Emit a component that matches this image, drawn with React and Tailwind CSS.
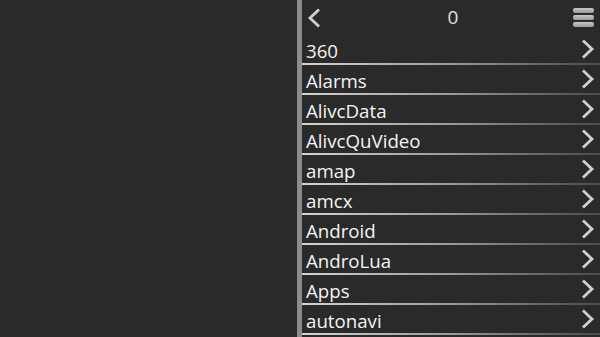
import React from "react";

const items = ["360","Alarms","AlivcData","AlivcQuVideo","amap","amcx","Android","AndroLua","Apps","autonavi"];

function Chevron() {
  return (
    <svg width="14" height="20" viewBox="0 0 14 20" className="shrink-0">
      <path d="M3 2.5 L11 10 L3 17.5" fill="none" stroke="#d0d0d0" strokeWidth="2.8" strokeLinecap="square" strokeLinejoin="miter" />
    </svg>
  );
}

export default function App() {
  return (
    <div className="w-[600px] h-[337px] overflow-hidden flex bg-[#2a2a2a] text-[#f4f4f4]" style={{ fontFamily: '"Open Sans", "Noto Sans", sans-serif' }}>
      <div className="w-[297px] shrink-0" />
      <div className="w-[5px] shrink-0 bg-[#8c8c8c]" />
      <div className="flex-1 flex flex-col">
        <div className="h-[35px] shrink-0 flex items-center justify-between pl-[5px] pr-[6px]">
          <svg width="14" height="20" viewBox="0 0 14 20">
            <path d="M11 2.5 L3 10 L11 17.5" fill="none" stroke="#cfcfcf" strokeWidth="2.8" strokeLinecap="square" />
          </svg>
          <span className="text-[19px] leading-none text-[#e0e0e0] pl-[12px]">0</span>
          <div className="flex flex-col gap-[2px] w-[21px] pb-[1px]">
            <div className="h-[5px] rounded-[2px] bg-gradient-to-b from-[#c8c8c8] to-[#9a9a9a]" />
            <div className="h-[5px] rounded-[2px] bg-gradient-to-b from-[#c8c8c8] to-[#9a9a9a]" />
            <div className="h-[5px] rounded-[2px] bg-gradient-to-b from-[#c8c8c8] to-[#9a9a9a]" />
          </div>
        </div>
        {items.map((t) => (
          <div key={t} className="h-[30px] shrink-0 flex flex-col">
            <div className="flex-1 flex items-center justify-between pl-[4px] pr-[5px]">
              <span className="text-[18.7px] leading-none pt-[4px]">{t}</span>
              <Chevron />
            </div>
            <div className="h-[2px] bg-gradient-to-r from-[#d4d4d4] via-[#9a9a9a] to-[#4a4a4a]" />
          </div>
        ))}
      </div>
    </div>
  );
}
